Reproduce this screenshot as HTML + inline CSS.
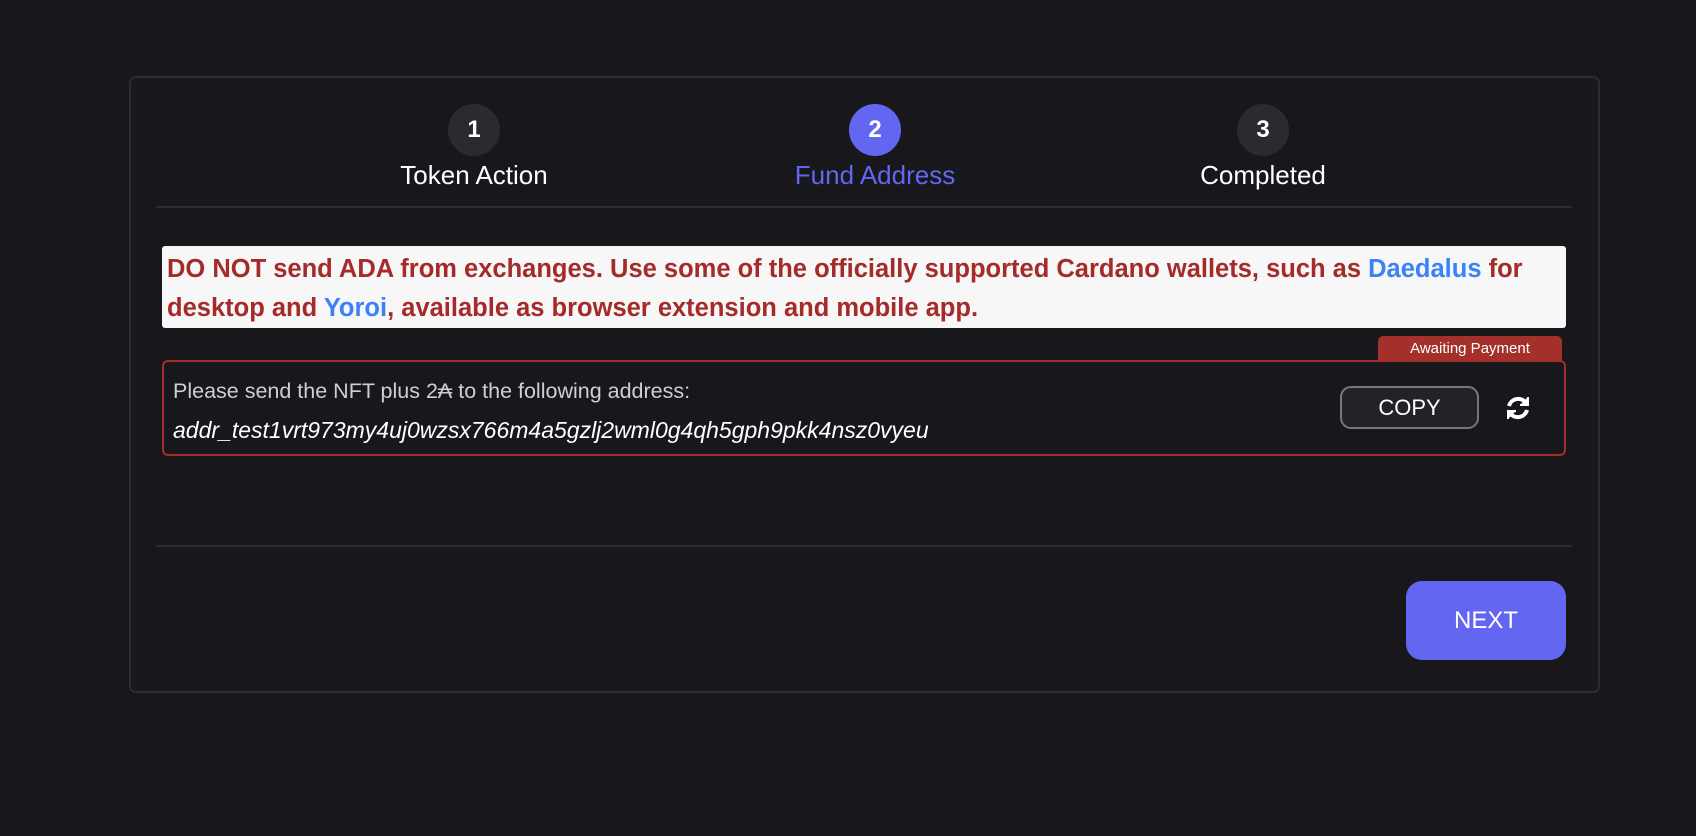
<!DOCTYPE html>
<html><head><meta charset="utf-8"><style>
*{box-sizing:border-box;margin:0;padding:0}
body{width:1696px;height:836px;background:#18171c;font-family:"Liberation Sans",sans-serif;position:relative;overflow:hidden}
.card{position:absolute;left:129px;top:76px;width:1471px;height:617px;border:2px solid #2c2c31;border-radius:7px}
.circ{position:absolute;width:52px;height:52px;border-radius:50%;background:#2a2a30;color:#fff;font-weight:bold;font-size:24px;line-height:52px;text-align:center;top:104px}
.lbl{position:absolute;top:160px;font-size:26px;color:#fff;width:300px;text-align:center}
.hr{position:absolute;left:156px;width:1416px;height:2px;background:#2c2c31}
.warn{position:absolute;left:162px;top:246px;width:1404px;height:82px;background:#f7f7f7;border-radius:3px;color:#a52a2a;font-weight:bold;font-size:25.5px;line-height:39px;padding:4px 5px}
.warn span{color:#3b82f6}
.tag{position:absolute;left:1378px;top:336px;width:184px;height:25px;background:#a3302b;border-radius:5px 5px 0 0;color:#fff;font-size:15px;text-align:center;line-height:26px}
.box{position:absolute;left:162px;top:360px;width:1404px;height:96px;border:2px solid #a3302b;border-radius:6px}
.t1{position:absolute;left:9px;top:17px;color:#cfcfcf;font-size:21.5px}
.t2{position:absolute;left:9px;top:55px;color:#fff;font-size:23px;font-style:italic}
.copy{position:absolute;left:1340px;top:386px;width:139px;height:43px;background:#222327;border:2px solid #777;border-radius:11px;color:#fff;font-size:22px;text-align:center;line-height:39px}
.next{position:absolute;left:1406px;top:581px;width:160px;height:79px;background:#6366f1;border-radius:16px;color:#fff;font-size:24px;text-align:center;line-height:79px}
</style></head><body>
<div class="card"></div>
<div class="circ" style="left:448px">1</div>
<div class="circ" style="left:849px;background:#6366f1">2</div>
<div class="circ" style="left:1237px">3</div>
<div class="lbl" style="left:324px">Token Action</div>
<div class="lbl" style="left:725px;color:#6366f1">Fund Address</div>
<div class="lbl" style="left:1113px">Completed</div>
<div class="hr" style="top:206px"></div>
<div class="warn">DO NOT send ADA from exchanges. Use some of the officially supported Cardano wallets, such as <span>Daedalus</span> for desktop and <span>Yoroi</span>, available as browser extension and mobile app.</div>
<div class="tag">Awaiting Payment</div>
<div class="box"><div class="t1">Please send the NFT plus 2₳ to the following address:</div><div class="t2">addr_test1vrt973my4uj0wzsx766m4a5gzlj2wml0g4qh5gph9pkk4nsz0vyeu</div></div>
<div class="copy">COPY</div>
<svg style="position:absolute;left:1505px;top:395px" width="26" height="26" viewBox="0 0 26 26" fill="none" stroke="#fff" stroke-width="4"><path d="M4 11 A9.5 9.5 0 0 1 21 8"/><path d="M22 15 A9.5 9.5 0 0 1 5 18"/><path d="M23 2 V10 H15" fill="#fff" stroke-width="2"/><path d="M3 24 V16 H11" fill="#fff" stroke-width="2"/></svg>
<div class="hr" style="top:545px"></div>
<div class="next">NEXT</div>
</body></html>
